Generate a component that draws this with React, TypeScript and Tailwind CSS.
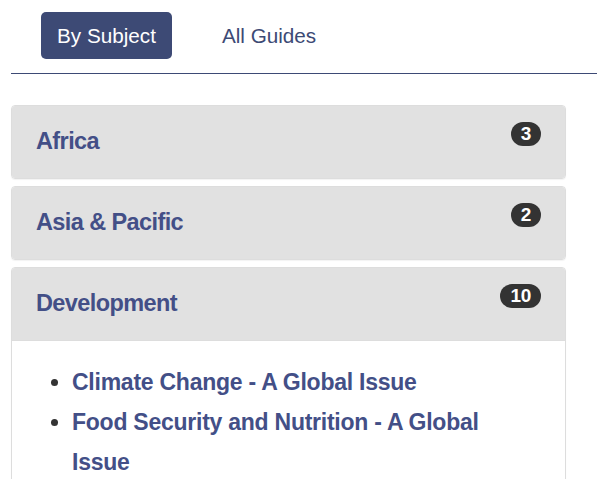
const navy = "text-[#434f87]";

interface Subject {
  name: string;
  count: number;
  open?: boolean;
  guides?: string[];
}

const subjects: Subject[] = [
  { name: "Africa", count: 3 },
  { name: "Asia & Pacific", count: 2 },
  {
    name: "Development",
    count: 10,
    open: true,
    guides: ["Climate Change - A Global Issue", "Food Security and Nutrition - A Global Issue"],
  },
];

const Badge = ({ n }: { n: number }) => (
  <span className="-mt-[7px] inline-block h-[24px] rounded-full bg-[#333333] px-[10px] text-[19px] font-bold leading-[24px] tracking-[-0.3px] text-white">
    {n}
  </span>
);

const Panel = ({ s }: { s: Subject }) => (
  <div className="overflow-hidden rounded-[4px] border border-[#dddddd] shadow-[0_1px_1px_rgba(0,0,0,0.05)]">
    <div
      className={`flex items-start justify-between bg-[#e1e1e1] pl-6 pr-[24px] pt-[23px] pb-[25px] ${
        s.open ? "border-b border-[#dddddd]" : ""
      }`}
    >
      <h3 className={`text-[23.5px] font-bold leading-[24px] tracking-[-0.6px] ${navy}`}>{s.name}</h3>
      <Badge n={s.count} />
    </div>
    {s.open && (
      <div className="bg-white pl-6 pr-[30px] pt-[21px] pb-6">
        <ul className="list-disc pl-9 text-[23px] leading-[40px] tracking-[-0.25px] text-[#333333]">
          {s.guides?.map((g) => (
            <li key={g}>
              <a href="#" className={`font-bold ${navy}`}>
                {g}
              </a>
            </li>
          ))}
        </ul>
      </div>
    )}
  </div>
);

export default function App() {
  return (
    <div className="min-h-screen overflow-hidden bg-white pl-[11px] [font-family:'Liberation_Sans',Arial,sans-serif]">
      <div className="flex items-center gap-[34px] border-b border-[#3d4a75] pl-[30px] pt-3 pb-[14px]">
        <button className="h-[47px] rounded-[5px] bg-[#3d4a75] px-4 text-[20.7px] text-white">By Subject</button>
        <button className="h-[47px] px-4 text-[20.7px] text-[#3d4a75]">All Guides</button>
      </div>
      <div className="mt-[31px] mr-[31px] flex flex-col gap-[7px]">
        {subjects.map((s) => (
          <Panel key={s.name} s={s} />
        ))}
      </div>
    </div>
  );
}
